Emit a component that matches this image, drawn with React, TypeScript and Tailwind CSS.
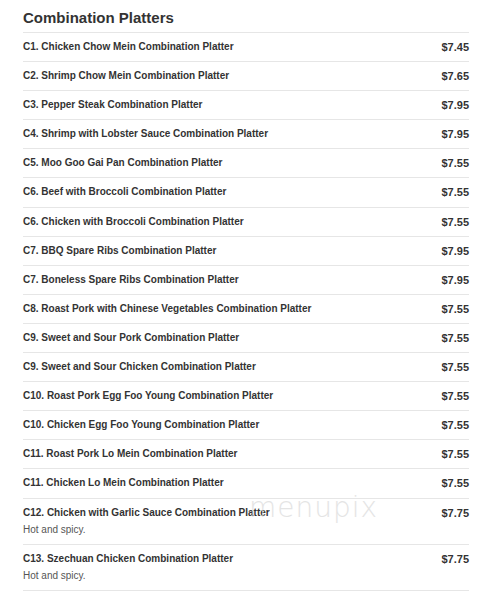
const items: { name: string; price: string; desc?: string }[] = [
  { name: "C1. Chicken Chow Mein Combination Platter", price: "$7.45" },
  { name: "C2. Shrimp Chow Mein Combination Platter", price: "$7.65" },
  { name: "C3. Pepper Steak Combination Platter", price: "$7.95" },
  { name: "C4. Shrimp with Lobster Sauce Combination Platter", price: "$7.95" },
  { name: "C5. Moo Goo Gai Pan Combination Platter", price: "$7.55" },
  { name: "C6. Beef with Broccoli Combination Platter", price: "$7.55" },
  { name: "C6. Chicken with Broccoli Combination Platter", price: "$7.55" },
  { name: "C7. BBQ Spare Ribs Combination Platter", price: "$7.95" },
  { name: "C7. Boneless Spare Ribs Combination Platter", price: "$7.95" },
  { name: "C8. Roast Pork with Chinese Vegetables Combination Platter", price: "$7.55" },
  { name: "C9. Sweet and Sour Pork Combination Platter", price: "$7.55" },
  { name: "C9. Sweet and Sour Chicken Combination Platter", price: "$7.55" },
  { name: "C10. Roast Pork Egg Foo Young Combination Platter", price: "$7.55" },
  { name: "C10. Chicken Egg Foo Young Combination Platter", price: "$7.55" },
  { name: "C11. Roast Pork Lo Mein Combination Platter", price: "$7.55" },
  { name: "C11. Chicken Lo Mein Combination Platter", price: "$7.55" },
  { name: "C12. Chicken with Garlic Sauce Combination Platter", price: "$7.75", desc: "Hot and spicy." },
  { name: "C13. Szechuan Chicken Combination Platter", price: "$7.75", desc: "Hot and spicy." },
];

export default function App() {
  return (
    <div className="relative w-[483px] h-[592px] overflow-hidden bg-white font-['Liberation_Sans',Arial,sans-serif] text-[#333]">
      <div className="pl-[23px] pr-[14px]">
        <h2 className="pt-[8px] pb-[5px] text-[15px] leading-[19px] font-bold text-[#333]">
          Combination Platters
        </h2>
        <div className="border-t border-[#e6e6e6]">
          {items.map((item, i) => (
            <div
              key={i}
              className={`flex justify-between border-b border-[#e6e6e6] ${
                item.desc ? "pt-[6px] pb-[6px]" : "py-[6px]"
              }`}
            >
              <div>
                <div className="text-[10px] leading-[16.1px] font-bold">{item.name}</div>
                {item.desc && (
                  <div className="text-[10px] leading-[16px] text-[#555] mt-[1px]">{item.desc}</div>
                )}
              </div>
              <div className="text-[11px] leading-[16.1px] font-bold">{item.price}</div>
            </div>
          ))}
        </div>
      </div>

      {/* watermark */}
      <div className="absolute left-[249px] top-[493px] text-[28px] leading-[30px] font-light tracking-[1px] text-[#dadada] font-['DejaVu_Sans',sans-serif] opacity-70">
        menupix
      </div>
    </div>
  );
}
